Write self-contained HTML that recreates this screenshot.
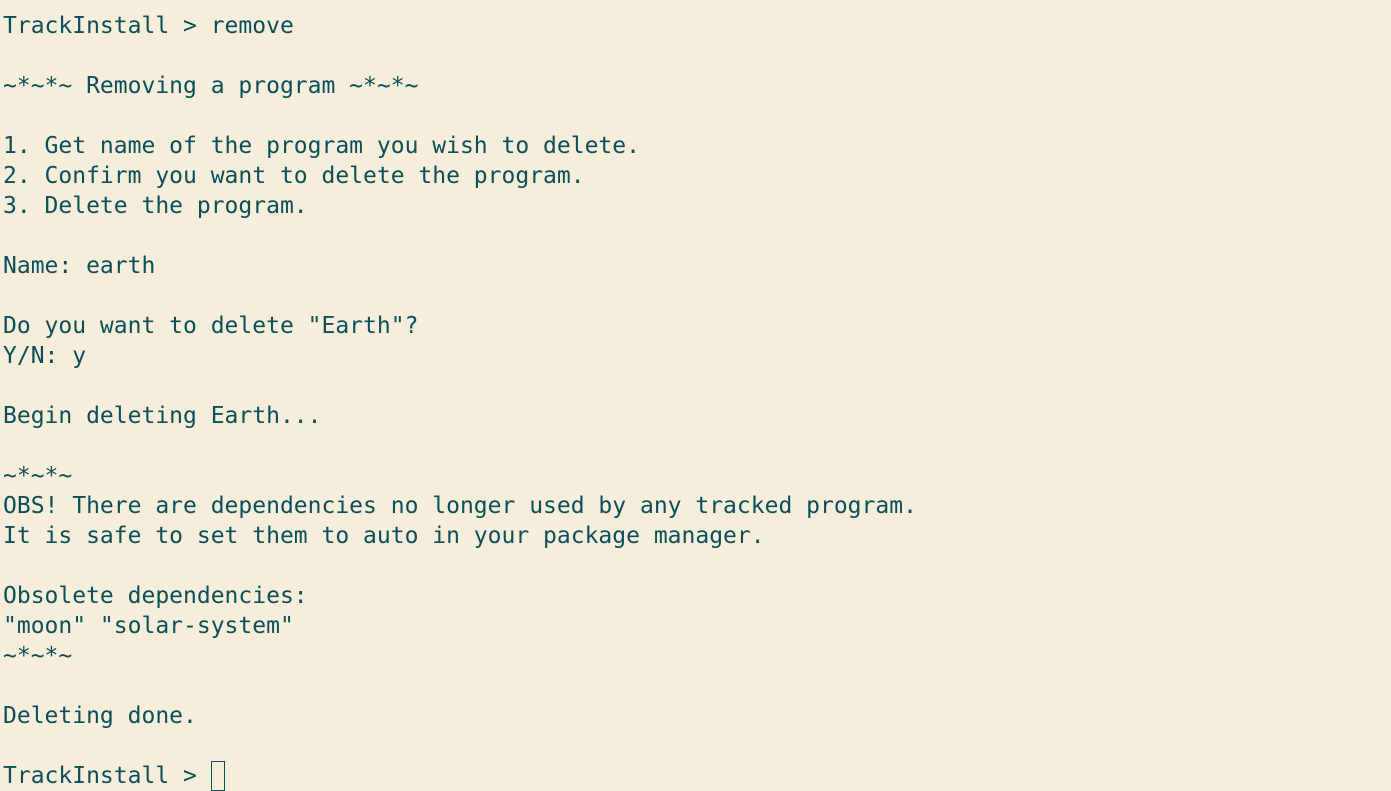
<!DOCTYPE html><html><head><style>
html,body{margin:0;background:#f6eddb;width:1391px;height:788px;overflow:hidden}
pre{margin:0;position:absolute;left:3px;top:11px;font-family:"DejaVu Sans Mono","Liberation Mono",monospace;font-size:23px;line-height:30px;color:#0b4f5a}
.c{display:inline-block;width:12px;height:28px;border:1px solid #0b4f5a;vertical-align:-8px}
</style></head><body><pre>TrackInstall &gt; remove

~*~*~ Removing a program ~*~*~

1. Get name of the program you wish to delete.
2. Confirm you want to delete the program.
3. Delete the program.

Name: earth

Do you want to delete "Earth"?
Y/N: y

Begin deleting Earth...

~*~*~
OBS! There are dependencies no longer used by any tracked program.
It is safe to set them to auto in your package manager.

Obsolete dependencies:
"moon" "solar-system"
~*~*~

Deleting done.

TrackInstall &gt; <span class="c"></span></pre></body></html>
